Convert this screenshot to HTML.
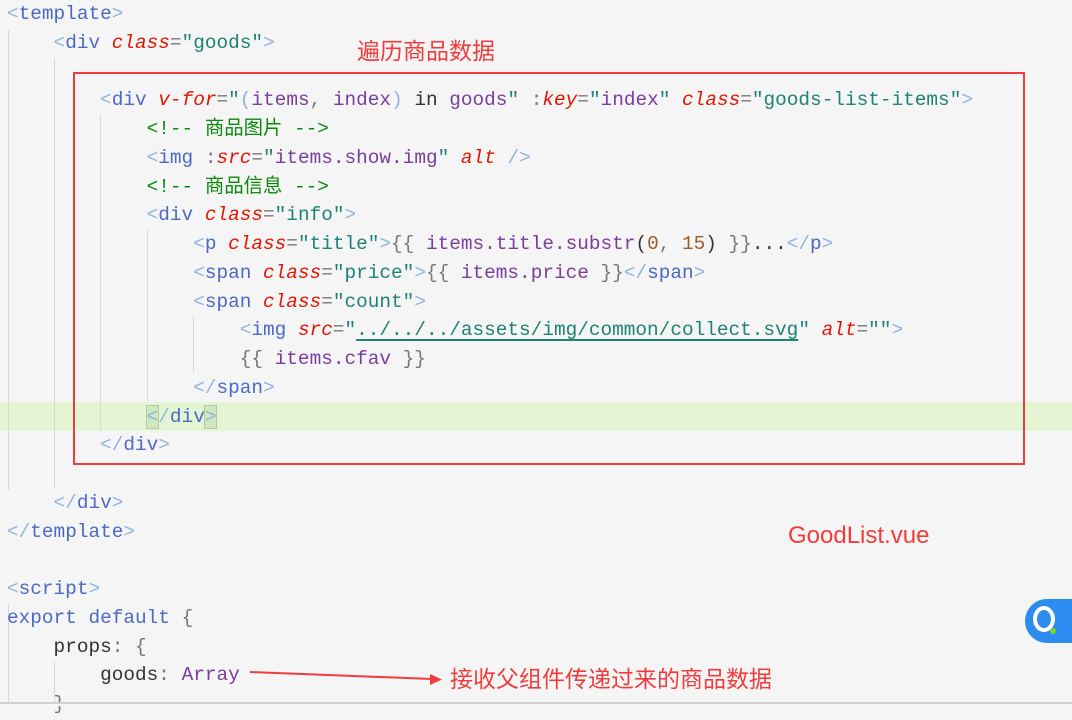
<!DOCTYPE html>
<html><head><meta charset="utf-8"><style>
html,body{margin:0;height:706px;}
body{width:1072px;background:#f5f5f5;overflow:hidden;position:relative;font-family:"Liberation Mono","Noto Sans CJK SC",monospace;}
.l{position:absolute;left:7px;height:28.75px;line-height:29.5px;font-size:19.4px;white-space:pre;color:#333;}
.b{color:#91b3e0}.t{color:#4b69c6}.a{color:#e51400;font-style:italic}.s{color:#1d8374}.e{color:#7a3e9d}.c{color:#0a8a0a}.n{color:#9c5d27}.p{color:#777}.k{color:#333}
.g{position:absolute;width:1px;background:#d8d8d8}
.ann{position:absolute;color:#f03c3c;font-family:"Liberation Sans","Noto Sans CJK SC",sans-serif;white-space:nowrap}
</style></head><body>
<div style="position:absolute;left:0;top:402px;width:1072px;height:29px;background:#e4f5d4"></div>
<div class="g" style="left:8px;top:30px;height:460px"></div>
<div class="g" style="left:54px;top:58px;height:430px"></div>
<div class="g" style="left:100px;top:115px;height:315px"></div>
<div class="g" style="left:147px;top:230px;height:172px"></div>
<div class="g" style="left:193px;top:316px;height:57px"></div>
<div class="g" style="left:8px;top:604px;height:100px"></div>
<div class="g" style="left:54px;top:662px;height:40px"></div>

<div class="l" style="top:0"><span class="b">&lt;</span><span class="t">template</span><span class="b">&gt;</span></div>
<div class="l" style="top:28.75px">    <span class="b">&lt;</span><span class="t">div</span> <span class="a">class</span><span class="p">=</span><span class="s">"goods"</span><span class="b">&gt;</span></div>
<div class="l" style="top:86.25px">        <span class="b">&lt;</span><span class="t">div</span> <span class="a">v-for</span><span class="p">=</span><span class="s">"</span><span class="b">(</span><span class="e">items</span><span class="p">,</span> <span class="e">index</span><span class="b">)</span> <span class="k">in</span> <span class="e">goods</span><span class="s">"</span> <span class="p">:</span><span class="a">key</span><span class="p">=</span><span class="s">"</span><span class="e">index</span><span class="s">"</span> <span class="a">class</span><span class="p">=</span><span class="s">"goods-list-items"</span><span class="b">&gt;</span></div>
<div class="l" style="top:115px">            <span class="c">&lt;!-- 商品图片 --&gt;</span></div>
<div class="l" style="top:143.75px">            <span class="b">&lt;</span><span class="t">img</span> <span class="p">:</span><span class="a">src</span><span class="p">=</span><span class="s">"</span><span class="e">items.show.img</span><span class="s">"</span> <span class="a">alt</span> <span class="b">/&gt;</span></div>
<div class="l" style="top:172.5px">            <span class="c">&lt;!-- 商品信息 --&gt;</span></div>
<div class="l" style="top:201.25px">            <span class="b">&lt;</span><span class="t">div</span> <span class="a">class</span><span class="p">=</span><span class="s">"info"</span><span class="b">&gt;</span></div>
<div class="l" style="top:230px">                <span class="b">&lt;</span><span class="t">p</span> <span class="a">class</span><span class="p">=</span><span class="s">"title"</span><span class="b">&gt;</span><span class="p">{{</span> <span class="e">items.title.substr</span><span class="k">(</span><span class="n">0</span><span class="p">,</span> <span class="n">15</span><span class="k">)</span> <span class="p">}}</span><span class="k">...</span><span class="b">&lt;/</span><span class="t">p</span><span class="b">&gt;</span></div>
<div class="l" style="top:258.75px">                <span class="b">&lt;</span><span class="t">span</span> <span class="a">class</span><span class="p">=</span><span class="s">"price"</span><span class="b">&gt;</span><span class="p">{{</span> <span class="e">items.price</span> <span class="p">}}</span><span class="b">&lt;/</span><span class="t">span</span><span class="b">&gt;</span></div>
<div class="l" style="top:287.5px">                <span class="b">&lt;</span><span class="t">span</span> <span class="a">class</span><span class="p">=</span><span class="s">"count"</span><span class="b">&gt;</span></div>
<div class="l" style="top:316.25px">                    <span class="b">&lt;</span><span class="t">img</span> <span class="a">src</span><span class="p">=</span><span class="s">"<span style="text-decoration:underline;text-decoration-thickness:2px;text-underline-offset:4px">../../../assets/img/common/collect.svg</span>"</span> <span class="a">alt</span><span class="p">=</span><span class="s">""</span><span class="b">&gt;</span></div>
<div class="l" style="top:345px">                    <span class="p">{{</span> <span class="e">items.cfav</span> <span class="p">}}</span></div>
<div class="l" style="top:373.75px">                <span class="b">&lt;/</span><span class="t">span</span><span class="b">&gt;</span></div>
<div class="l" style="top:402.5px">            <span class="b" style="background:#cfe8bd;outline:1px solid #b5c9a5">&lt;</span><span class="b">/</span><span class="t">div</span><span class="b" style="background:#cfe8bd;outline:1px solid #b5c9a5">&gt;</span></div>
<div class="l" style="top:431.25px">        <span class="b">&lt;/</span><span class="t">div</span><span class="b">&gt;</span></div>
<div class="l" style="top:488.75px">    <span class="b">&lt;/</span><span class="t">div</span><span class="b">&gt;</span></div>
<div class="l" style="top:517.5px"><span class="b">&lt;/</span><span class="t">template</span><span class="b">&gt;</span></div>
<div class="l" style="top:575px"><span class="b">&lt;</span><span class="t">script</span><span class="b">&gt;</span></div>
<div class="l" style="top:603.75px"><span class="t">export</span> <span class="t">default</span> <span class="p">{</span></div>
<div class="l" style="top:632.5px">    <span class="k">props</span><span class="p">:</span> <span class="p">{</span></div>
<div class="l" style="top:661.25px">        <span class="k">goods</span><span class="p">:</span> <span class="e">Array</span></div>
<div class="l" style="top:690px">    <span class="p">}</span></div>
<div style="position:absolute;left:0;top:702px;width:1072px;height:4px;background:#f5f5f5;border-top:2px solid #d0d0d0;box-sizing:border-box"></div>

<div style="position:absolute;left:73px;top:72px;width:948px;height:389px;border:2px solid #f03c3c"></div>
<div class="ann" style="left:357px;top:32px;font-size:23px">遍历商品数据</div>
<div class="ann" style="left:788px;top:522px;font-size:24px">GoodList.vue</div>
<div class="ann" style="left:450px;top:660px;font-size:23px">接收父组件传递过来的商品数据</div>
<svg style="position:absolute;left:0;top:0" width="1072" height="706"><line x1="250" y1="672" x2="432" y2="679" stroke="#f03c3c" stroke-width="2"/><polygon points="442,679.5 430,674 430,685" fill="#f03c3c"/></svg>
<div style="position:absolute;left:1025px;top:599px;width:50px;height:44px;border-radius:22px 0 0 22px;background:#2d8cf0"></div>
<div style="position:absolute;left:1033px;top:606px;width:22px;height:26px;border:4px solid #fff;border-radius:50%;box-sizing:border-box"></div>
<div style="position:absolute;left:1050px;top:628px;width:6px;height:6px;border-radius:50%;background:#7ed321"></div>
</body></html>
